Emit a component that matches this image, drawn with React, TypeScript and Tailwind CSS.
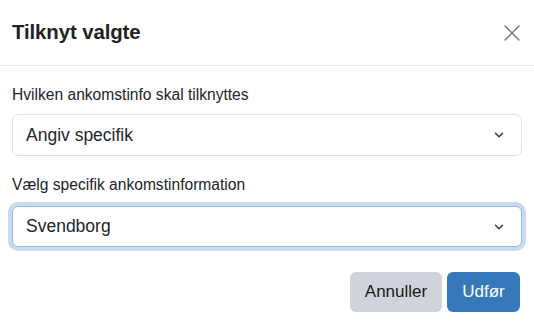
const Chevron = () => (
  <svg width="10" height="6" viewBox="0 0 10 6" fill="none" className="shrink-0">
    <path d="M1.5 1.2L5 4.7l3.5-3.5" stroke="#343a40" strokeWidth="1.5" strokeLinecap="round" strokeLinejoin="round" />
  </svg>
);

const CloseIcon = () => (
  <svg width="16" height="16" viewBox="0 0 16 16" fill="none">
    <path d="M1 1l14 14M15 1L1 15" stroke="#7a7a7a" strokeWidth="1.5" strokeLinecap="round" />
  </svg>
);

const SelectBox = ({ value, focused }: { value: string; focused?: boolean }) => (
  <div
    className={
      focused
        ? "flex h-[41px] items-center justify-between rounded-[6px] border border-[#93bde3] bg-white pl-[13px] pr-[17px] text-[17.5px] text-[#212529] shadow-[0_0_0_4px_#c9dcef]"
        : "flex h-[42px] items-center justify-between rounded-[6px] border border-[#dee2e6] bg-white pl-[13px] pr-[17px] text-[17.5px] text-[#212529]"
    }
  >
    <span>{value}</span>
    <Chevron />
  </div>
);

export default function App() {
  return (
    <div
      className="h-[335px] w-[534px] bg-white text-[#212529]"
      style={{ fontFamily: '"Liberation Sans", Arial, sans-serif' }}
    >
      <div className="flex h-[66px] items-center justify-between border-b border-[#e3e5e8] pl-3 pr-[14px]">
        <h3 className="text-[20.4px] font-bold leading-none tracking-[-0.1px] text-[#222]">Tilknyt valgte</h3>
        <CloseIcon />
      </div>

      <div className="px-3 pt-[18px]">
        <label className="block text-[15.6px] leading-[22px]">Hvilken ankomstinfo skal tilknyttes</label>
        <div className="mt-[8px]">
          <SelectBox value="Angiv specifik" />
        </div>

        <label className="mt-[18px] block text-[15.6px] leading-[22px]">Vælg specifik ankomstinformation</label>
        <div className="mt-[10px]">
          <SelectBox value="Svendborg" focused />
        </div>
      </div>

      <div className="flex justify-end gap-[5px] px-[14px] pt-[25px]">
        <button className="h-[40px] w-[92px] rounded-[6px] bg-[#d0d4da] text-[17px] text-[#1a1a1a]">Annuller</button>
        <button className="h-[40px] w-[73px] rounded-[6px] bg-[#3679bb] text-[17px] text-white">Udfør</button>
      </div>
    </div>
  );
}
